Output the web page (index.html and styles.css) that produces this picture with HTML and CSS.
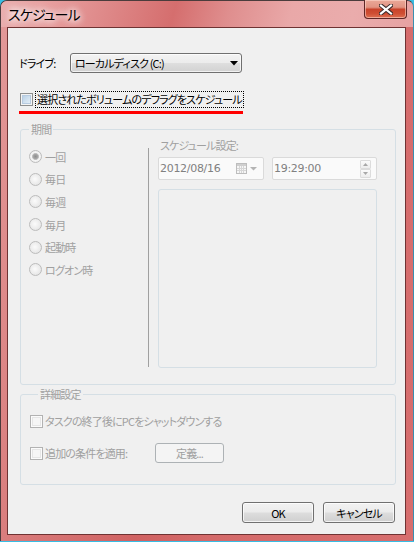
FILE: index.html
```html
<!DOCTYPE html>
<html lang="ja">
<head>
<meta charset="utf-8">
<title>スケジュール</title>
<link rel="stylesheet" href="styles.css">
</head>
<body>
<div class="window">
  <div class="titlebar">
    <span class="title">スケジュール</span>
    <div class="close">
      <svg width="14" height="11" viewBox="0 0 14 11"><path d="M2 1.5 L12 9.5 M12 1.5 L2 9.5" stroke="#3b2b2b" stroke-width="4.2" stroke-linecap="square"/><path d="M2 1.5 L12 9.5 M12 1.5 L2 9.5" stroke="#ffffff" stroke-width="2.2" stroke-linecap="square"/></svg>
    </div>
  </div>
  <div class="client">
    <div class="drive-row">
      <span class="drive-label">ドライブ:</span>
      <div class="select">
        <span>ローカルディスク (C:)</span>
        <svg width="8" height="5" viewBox="0 0 8 5"><path d="M0 0H8L4 4.5Z" fill="#000"/></svg>
      </div>
    </div>
    <div class="sched-row">
      <span class="checkbox active"></span>
      <span class="focus">選択されたボリュームのデフラグをスケジュール</span>
    </div>
    <div class="redline"></div>

    <fieldset class="group period">
      <legend>期間</legend>
      <div class="period-body">
        <div class="radios">
          <div class="radio-row"><span class="radio checked"></span><span>一回</span></div>
          <div class="radio-row"><span class="radio"></span><span>毎日</span></div>
          <div class="radio-row"><span class="radio"></span><span>毎週</span></div>
          <div class="radio-row"><span class="radio"></span><span>毎月</span></div>
          <div class="radio-row"><span class="radio"></span><span>起動時</span></div>
          <div class="radio-row"><span class="radio"></span><span>ログオン時</span></div>
        </div>
        <div class="sep"></div>
        <div class="sched">
          <div class="sched-label">スケジュール設定:</div>
          <div class="fields">
            <div class="field date">
              <span>2012/08/16</span>
              <span class="date-tools">
                <svg width="11" height="11" viewBox="0 0 11 11"><rect x="0.5" y="0.5" width="10" height="10" fill="#f6f6f6" stroke="#bdbdbd"/><rect x="1" y="1" width="9" height="2" fill="#cfcfcf"/><path d="M1 5.5H10M1 7.5H10M3.5 3V10M5.5 3V10M7.5 3V10" stroke="#d6d6d6"/></svg>
                <svg width="7" height="4" viewBox="0 0 7 4"><path d="M0 0H7L3.5 3.5Z" fill="#b4b4b4"/></svg>
              </span>
            </div>
            <div class="field time">
              <span>19:29:00</span>
              <span class="spin">
                <span class="spin-btn"><svg width="5" height="3" viewBox="0 0 5 3"><path d="M0 3H5L2.5 0Z" fill="#a8a8a8"/></svg></span>
                <span class="spin-btn"><svg width="5" height="3" viewBox="0 0 5 3"><path d="M0 0H5L2.5 3Z" fill="#a8a8a8"/></svg></span>
              </span>
            </div>
          </div>
          <div class="bigbox"></div>
        </div>
      </div>
    </fieldset>

    <fieldset class="group detail">
      <legend>詳細設定</legend>
      <div class="opt-row">
        <span class="checkbox"></span>
        <span>タスクの終了後にPCをシャットダウンする</span>
      </div>
      <div class="opt-row second">
        <span class="checkbox"></span>
        <span class="cond-label">追加の条件を適用:</span>
        <span class="define-btn">定義...</span>
      </div>
    </fieldset>

    <div class="buttons">
      <span class="btn">OK</span>
      <span class="btn">キャンセル</span>
    </div>
  </div>
</div>
</body>
</html>
```

FILE: styles.css
```css
* { box-sizing: border-box; }
html, body { margin: 0; padding: 0; }
body {
  width: 414px;
  height: 542px;
  overflow: hidden;
  background: #37bde4;
  font-family: "Noto Sans CJK JP", "Meiryo UI", sans-serif;
  font-size: 11px;
  letter-spacing: -0.85px;
  font-feature-settings: "palt";
  color: #000;
}
.window {
  width: 414px;
  height: 541px;
  display: flex;
  flex-direction: column;
  border: 1px solid #4b3c3c;
  border-right-color: #3a8fb0;
  border-bottom: none;
  border-radius: 7px 7px 0 0;
  padding: 0 7px 6px 6px;
  background: linear-gradient(100deg, #e39a9a 0%, #d97c7c 20%, #d06262 45%, #d46a6a 60%, #d76e6e 100%);
}
.titlebar {
  height: 26px;
  margin: 0 -7px 0 -6px;
  display: flex;
  justify-content: space-between;
  align-items: flex-start;
  border-radius: 6px 6px 0 0;
  background: linear-gradient(105deg, #eab0b0 0%, #e79e9e 12%, #dd8585 28%, #d56e6e 42%, #df8e8e 55%, #e9a8a8 70%, #eaacac 85%, #e6a2a2 100%);
}
.title {
  padding-left: 7px;
  line-height: 27px;
  font-size: 14px;
  letter-spacing: -0.9px;
  color: #000;
  text-shadow: 0 0 6px #fff, 0 0 8px #fff, 0 0 10px #fff;
}
.close {
  width: 43px;
  height: 19px;
  margin: -1px 6px 0 0;
  border: 1px solid #5e2626;
  border-top: none;
  border-radius: 0 0 4px 4px;
  background: linear-gradient(180deg, #eaa898 0%, #e29483 40%, #c9432b 52%, #cf4e33 75%, #de6f52 100%);
  box-shadow: inset 0 0 0 1px rgba(255,220,210,0.55);
  display: flex;
  align-items: center;
  justify-content: center;
}
.client {
  flex: 1;
  display: flex;
  flex-direction: column;
  border: 1px solid #6f3333;
  background: #f0f0f0;
}

/* drive row */
.drive-row {
  margin-top: 25px;
  padding-left: 11px;
  height: 20px;
  display: flex;
  align-items: center;
}
.drive-label { width: 51px; }
.select {
  width: 172px;
  height: 20px;
  border: 1px solid #707070;
  border-radius: 3px;
  background: linear-gradient(180deg, #f3f3f3 0%, #ececec 48%, #dedede 52%, #d2d2d2 100%);
  box-shadow: inset 0 0 0 1px rgba(255,255,255,0.7);
  display: flex;
  align-items: center;
  justify-content: space-between;
  padding: 0 3px 0 4px;
  line-height: 16px;
}

/* schedule checkbox */
.sched-row {
  margin-top: 18px;
  padding-left: 12px;
  height: 17px;
  display: flex;
  align-items: center;
  gap: 2px;
}
.checkbox {
  width: 13px;
  height: 13px;
  flex: none;
  border: 1px solid #b2b2b2;
  background: #f6f6f6;
  box-shadow: inset 0 0 0 1px #fbfbfb, inset 0 0 0 2px #e6e6e6;
}
.checkbox.active {
  border-color: #8e8f8f;
  background: linear-gradient(135deg, #aec8e0 0%, #cfe0ef 50%, #eef5fb 100%);
  box-shadow: inset 0 0 0 1px #f4f4f4, inset 0 0 0 2px #b7cbe0;
}
.focus {
  border: 1px dotted #000;
  height: 17px;
  line-height: 15px;
  padding: 0 1px;
  white-space: nowrap;
}
.redline {
  margin: 3px 0 0 11px;
  width: 224px;
  height: 3px;
  background: #ff0000;
}

/* group boxes */
.group {
  margin: 7px 9px 0 12px;
  border: 1px solid #d5dfe5;
  border-radius: 3px;
  padding: 0 18px 16px 0;
  min-width: 0;
  color: #a0a0a0;
}
.group legend {
  margin-left: 8px;
  padding: 0 2px;
  line-height: 16px;
  height: 16px;
}
.period-body {
  display: flex;
  height: 231px;
}
.radios {
  width: 127px;
  padding: 8.5px 0 0 8px;
}
.radio-row {
  height: 22.6px;
  display: flex;
  align-items: center;
  gap: 3px;
}
.radio {
  width: 13px;
  height: 13px;
  border-radius: 50%;
  border: 1px solid #bcbcbc;
  background: radial-gradient(circle at 45% 45%, #fbfbfb 0%, #ececec 55%, #dcdcdc 100%);
}
.radio.checked {
  background: radial-gradient(circle, #8e8e8e 0, #a6a6a6 2.2px, #c4c4c4 3.2px, #f6f6f6 3.8px, #e6e6e6 100%);
}
.sep {
  width: 1px;
  background: #a0a0a0;
  margin: 11px 0 1px 0;
}
.sched {
  width: 219px;
  margin-left: 9px;
  display: flex;
  flex-direction: column;
}
.sched-label {
  height: 16px;
  line-height: 16px;
  padding-left: 2px;
  margin-bottom: 4px;
}
.fields {
  display: flex;
  gap: 8px;
  height: 23px;
}
.field {
  height: 23px;
  border: 1px solid #dadada;
  border-radius: 2px;
  background: #fafafa;
  display: flex;
  align-items: center;
  justify-content: space-between;
  padding-left: 1px;
  color: #808080;
  font-family: "DejaVu Sans", "Noto Sans CJK JP", sans-serif;
  font-size: 11px;
  letter-spacing: -0.3px;
}
.field.date { width: 106px; padding-right: 6px; }
.field.time { width: 105px; padding-right: 5px; }
.date-tools {
  display: flex;
  align-items: center;
  gap: 3px;
}
.spin {
  display: flex;
  flex-direction: column;
  width: 11px;
  height: 18px;
}
.spin-btn {
  flex: 1;
  border: 1px solid #dcdcdc;
  border-radius: 1px;
  background: linear-gradient(#fbfbfb, #ededed);
  display: flex;
  align-items: center;
  justify-content: center;
}
.bigbox {
  margin-top: 9px;
  height: 179px;
  border: 1px solid #d5dfe5;
  border-radius: 3px;
}

.detail {
  margin-top: 1px;
  padding: 9px 9px 21px 9px;
}
.opt-row {
  height: 20px;
  display: flex;
  align-items: center;
  gap: 2px;
}
.opt-row.second { margin-top: 12px; }
.cond-label { width: 108px; }
.define-btn {
  width: 69px;
  height: 20px;
  border: 1px solid #adb2b5;
  border-radius: 3px;
  background: #f4f4f4;
  display: flex;
  align-items: center;
  justify-content: center;
}

.buttons {
  margin-top: 17px;
  display: flex;
  justify-content: flex-end;
  gap: 9px;
  padding-right: 10px;
}
.btn {
  width: 72px;
  height: 21px;
  border: 1px solid #707070;
  border-radius: 3px;
  background: linear-gradient(180deg, #f2f2f2 0%, #ebebeb 48%, #dddddd 52%, #cfcfcf 100%);
  box-shadow: inset 0 0 0 1px rgba(255,255,255,0.75);
  display: flex;
  align-items: center;
  justify-content: center;
}
```
